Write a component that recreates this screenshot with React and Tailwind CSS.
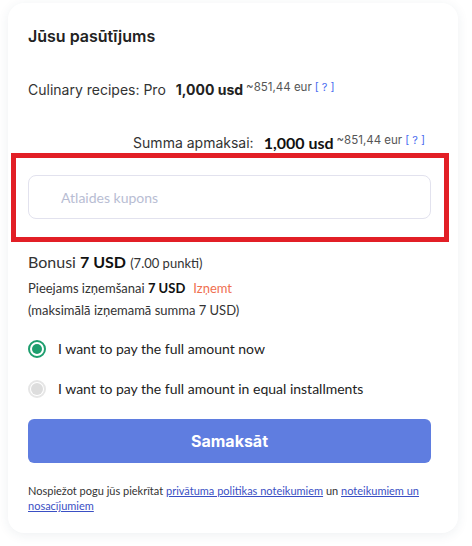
import React from 'react';

function Radio({ checked, label }) {
  return (
    <label className="flex h-[20px] items-center gap-[12px]">
      {checked ? (
        <span className="flex h-[18px] w-[18px] items-center justify-center rounded-full border-2 border-[#1e9e6e] bg-white">
          <span className="h-[10px] w-[10px] rounded-full bg-[#1e9e6e]" />
        </span>
      ) : (
        <span className="flex h-[18px] w-[18px] items-center justify-center rounded-full border-2 border-[#e6e6e6] bg-white">
          <span className="h-[12px] w-[12px] rounded-full bg-[#dddddd]" />
        </span>
      )}
      <span className="text-[14px] leading-[20px] text-[#222]">{label}</span>
    </label>
  );
}

function Price({ usdClass }) {
  return (
    <>
      <span className={usdClass}>1,000 usd</span>
      <span className="ml-[3px] self-start text-[11.5px] leading-[14px] text-[#555]">~851,44 eur</span>
      <span className="ml-[3px] self-start text-[11px] leading-[14px] text-[#4a6cf0]">[ ? ]</span>
    </>
  );
}

export default function App() {
  return (
    <div className="min-h-[546px] bg-white pl-[8px] pr-[14px] pt-[3px] font-['Lato',sans-serif]">
      <div className="rounded-[16px] bg-white pb-[20px] shadow-[0_2px_12px_rgba(40,60,90,0.08)]">
        <div className="pl-[20px] pr-[27px] pt-[23px]">
          <h1 className="font-['Inter',sans-serif] text-[16px] font-semibold leading-[20px] text-[#222]">Jūsu pasūtījums</h1>

          <div className="mt-[34px] flex h-[20px] items-end font-['Inter',sans-serif] text-[14px] leading-[20px] text-[#333]">
            <span>Culinary recipes: Pro</span>
            <Price usdClass="ml-[10px] font-bold text-[#222]" />
          </div>

          <div className="mt-[33px] flex h-[20px] items-end justify-end pr-[6px] font-['Inter',sans-serif] text-[14px] leading-[20px] text-[#333]">
            <span>Summa apmaksai:</span>
            <Price usdClass="ml-[10px] font-['Lato',sans-serif] text-[16px] font-bold leading-[21px] text-[#111]" />
          </div>
        </div>

        <div className="ml-[3px] mr-[9px] border-[5px] border-[#e21f26] pb-[18px] pl-[12px] pr-[13px] pt-[17px]">
          <input
            className="h-[44px] w-full rounded-[8px] border border-[#e2e2ee] bg-white pl-[32px] text-[14px] outline-none placeholder:text-[#b8bdd3]"
            placeholder="Atlaides kupons"
          />
        </div>

        <div className="pl-[20px] pr-[27px]">
          <div className="mt-[9px] text-[16px] leading-[22px] text-[#333]">
            Bonusi <span className="font-bold text-[#111]">7 USD</span>{' '}
            <span className="text-[13px]">(7.00 punkti)</span>
          </div>
          <div className="mt-[4px] text-[13px] leading-[20px] text-[#333]">
            Pieejams izņemšanai <span className="font-bold text-[#111]">7 USD</span>
            <span className="ml-[8px] text-[#f07050]">Izņemt</span>
          </div>
          <div className="mt-[2px] text-[13px] leading-[20px] text-[#333]">(maksimālā izņemamā summa 7 USD)</div>

          <div className="mt-[19px] flex flex-col gap-[20px]">
            <Radio checked label="I want to pay the full amount now" />
            <Radio label="I want to pay the full amount in equal installments" />
          </div>

          <button className="mt-[20px] h-[44px] w-full rounded-[6px] bg-[#5f7de0] font-['Inter',sans-serif] text-[16px] font-bold text-white">
            Samaksāt
          </button>

          <p className="mt-[20px] text-[11px] leading-[15px] text-[#333]">
            Nospiežot pogu jūs piekrītat{' '}
            <a className="text-[#3a4fc4] underline">privātuma politikas noteikumiem</a> un{' '}
            <a className="text-[#3a4fc4] underline">noteikumiem un nosacījumiem</a>
          </p>
        </div>
      </div>
    </div>
  );
}
